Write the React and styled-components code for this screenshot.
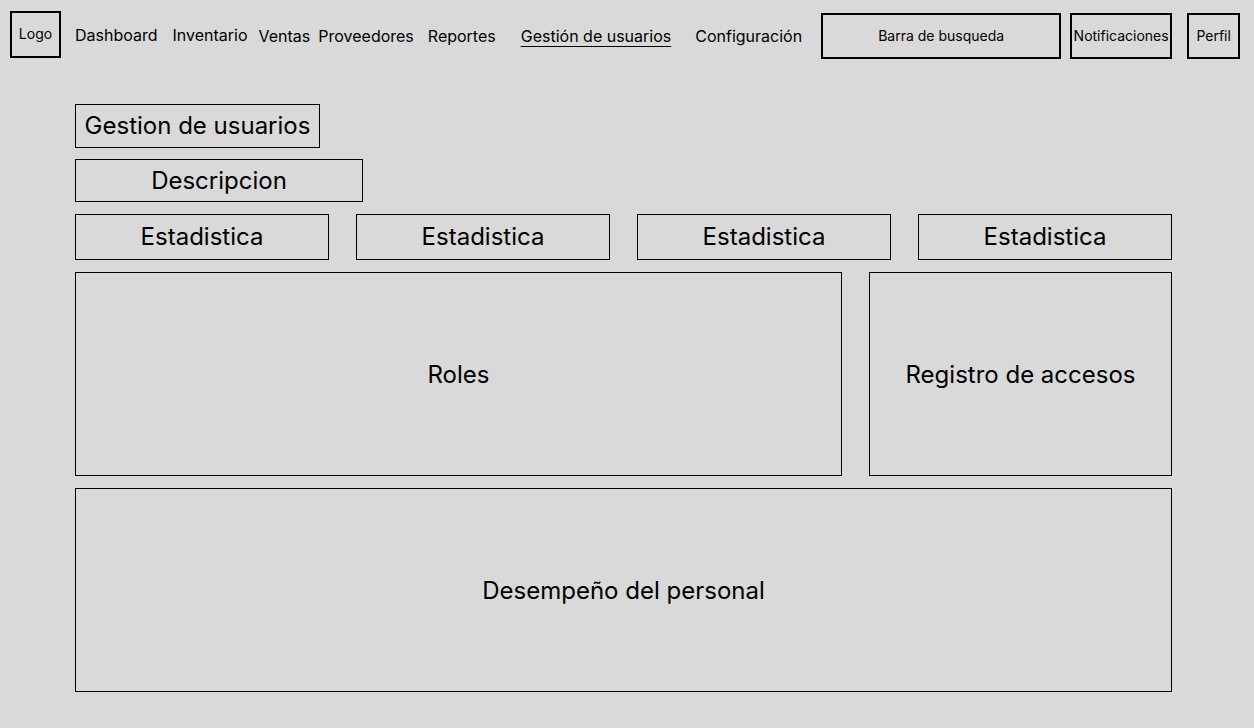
import React from 'react';
import styled, { createGlobalStyle } from 'styled-components';

const GlobalStyle = createGlobalStyle`
    html, body {
        margin: 0;
        padding: 0;
        background: #d9d9d9;
    }
    body {
        font-family: 'Inter', 'Noto Sans', sans-serif;
        color: #000;
    }
`;

const Page = styled.div`
    width: 1254px;
    height: 728px;
    background: #d9d9d9;
    box-sizing: border-box;
    overflow: hidden;
`;

const Header = styled.header`
    display: flex;
    align-items: flex-start;
    padding: 11px 0 0 10px;
    height: 60px;
    box-sizing: border-box;
`;

const LogoBox = styled.div`
    width: 51px;
    height: 47px;
    box-sizing: border-box;
    border: 2px solid #000;
    display: flex;
    align-items: center;
    justify-content: center;
    font-size: 14px;
    padding-bottom: 2px;
`;

const Nav = styled.nav`
    display: flex;
    align-items: flex-start;
`;

const NavLink = styled.a`
    font-size: 16px;
    line-height: 19px;
    color: #000;
    white-space: nowrap;
    margin-left: ${p => p.$ml}px;
    margin-top: ${p => p.$mt}px;
    text-decoration: ${p => (p.$active ? 'underline' : 'none')};
    text-underline-offset: 4px;
    text-decoration-thickness: 1px;
`;

const HeaderBox = styled.div`
    width: ${p => p.$w}px;
    height: 46px;
    margin-left: ${p => p.$ml}px;
    margin-top: 2px;
    box-sizing: border-box;
    border: 2px solid #000;
    display: flex;
    align-items: center;
    justify-content: center;
    font-size: 14px;
    white-space: nowrap;
    padding-bottom: 1px;
`;

const Main = styled.main`
    padding: 44px 82px 0 75px;
    display: flex;
    flex-direction: column;
    align-items: flex-start;
`;

const Panel = styled.div`
    box-sizing: border-box;
    border: 1px solid #000;
    display: flex;
    align-items: center;
    justify-content: center;
    font-size: 24px;
    white-space: nowrap;
    width: ${p => (p.$w ? `${p.$w}px` : 'auto')};
    height: ${p => p.$h}px;
    padding-bottom: ${p => p.$pb || 0}px;
`;

const StatsRow = styled.div`
    display: grid;
    grid-template-columns: repeat(4, 254px);
    column-gap: 27px;
    margin-top: 12px;
`;

const MiddleRow = styled.div`
    display: grid;
    grid-template-columns: 767px 303px;
    column-gap: 27px;
    margin-top: 12px;
`;

const navItems = [
    { label: 'Dashboard', ml: 14, mt: 15 },
    { label: 'Inventario', ml: 15, mt: 15 },
    { label: 'Ventas', ml: 11, mt: 16 },
    { label: 'Proveedores', ml: 8, mt: 16 },
    { label: 'Reportes', ml: 14, mt: 16 },
    { label: 'Gestión de usuarios', ml: 25, mt: 16, active: true },
    { label: 'Configuración', ml: 24, mt: 16 },
];

const App = () => {
    return (
        <Page>
            <GlobalStyle />
            <Header>
                <LogoBox>Logo</LogoBox>
                <Nav>
                    {navItems.map(item => (
                        <NavLink key={item.label} $ml={item.ml} $mt={item.mt} $active={item.active}>
                            {item.label}
                        </NavLink>
                    ))}
                </Nav>
                <HeaderBox $w={240} $ml={19}>Barra de busqueda</HeaderBox>
                <HeaderBox $w={102} $ml={9}>Notificaciones</HeaderBox>
                <HeaderBox $w={53} $ml={15}>Perfil</HeaderBox>
            </Header>

            <Main>
                <Panel $w={245} $h={44} $pb={2}>Gestion de usuarios</Panel>
                <Panel $w={288} $h={43} style={{ marginTop: 11 }}>Descripcion</Panel>
                <StatsRow>
                    <Panel $h={46} $pb={1}>Estadistica</Panel>
                    <Panel $h={46} $pb={1}>Estadistica</Panel>
                    <Panel $h={46} $pb={1}>Estadistica</Panel>
                    <Panel $h={46} $pb={1}>Estadistica</Panel>
                </StatsRow>
                <MiddleRow>
                    <Panel $h={204}>Roles</Panel>
                    <Panel $h={204}>Registro de accesos</Panel>
                </MiddleRow>
                <Panel $w={1097} $h={204} style={{ marginTop: 12 }}>Desempeño del personal</Panel>
            </Main>
        </Page>
    );
};

export default App;
